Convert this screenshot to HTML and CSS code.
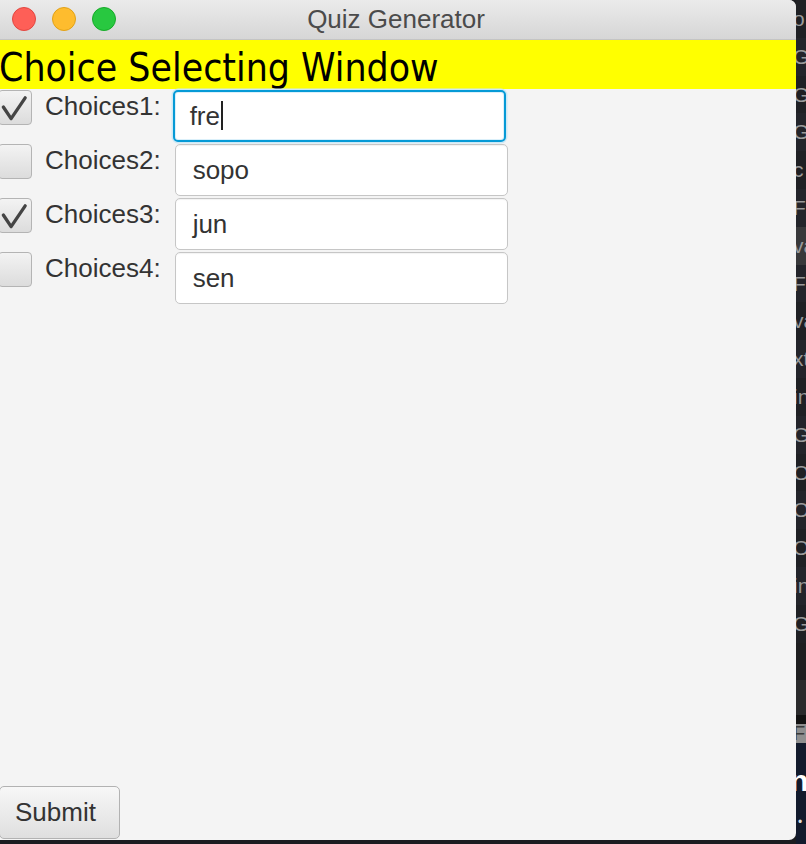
FILE: index.html
```html
<!DOCTYPE html>
<html lang="en">
<head>
<meta charset="utf-8">
<title>Quiz Generator</title>
<link rel="stylesheet" href="styles.css">
</head>
<body>
<div class="desk">
  <div class="window">
    <div class="titlebar">
      <div class="lights">
        <span class="light red"></span>
        <span class="light yellow"></span>
        <span class="light green"></span>
      </div>
      <div class="title">Quiz Generator</div>
    </div>
    <div class="banner">Choice Selecting Window</div>
    <div class="rows">
      <div class="row">
        <span class="check"><svg viewBox="0 0 34 34" width="34" height="34"><path d="M5.5 16 L13.5 28 L28 6.5" fill="none" stroke="#444" stroke-width="3.4" stroke-linecap="round" stroke-linejoin="round"/></svg></span>
        <span class="label">Choices1:</span>
        <div class="field focused">fre<span class="caret"></span></div>
      </div>
      <div class="row">
        <span class="check"></span>
        <span class="label">Choices2:</span>
        <div class="field">sopo</div>
      </div>
      <div class="row">
        <span class="check"><svg viewBox="0 0 34 34" width="34" height="34"><path d="M5.5 16 L13.5 28 L28 6.5" fill="none" stroke="#444" stroke-width="3.4" stroke-linecap="round" stroke-linejoin="round"/></svg></span>
        <span class="label">Choices3:</span>
        <div class="field">jun</div>
      </div>
      <div class="row">
        <span class="check"></span>
        <span class="label">Choices4:</span>
        <div class="field">sen</div>
      </div>
    </div>
    <button class="submit">Submit</button>
  </div>
  <div class="side">
    <div class="list">
      <div class="item">o</div>
      <div class="item">G</div>
      <div class="item">G</div>
      <div class="item">G</div>
      <div class="item">c</div>
      <div class="item">F</div>
      <div class="item hl">va</div>
      <div class="item">F</div>
      <div class="item">va</div>
      <div class="item">xt</div>
      <div class="item">in</div>
      <div class="item">G</div>
      <div class="item">O</div>
      <div class="item">O</div>
      <div class="item">O</div>
      <div class="item">in</div>
      <div class="item">G</div>
    </div>
    <div class="band b1"></div>
    <div class="band b2"></div>
    <div class="band b3"></div>
    <div class="band b4">F</div>
    <div class="navy">
      <div class="big">n</div>
      <div class="dot">•</div>
    </div>
  </div>
</div>
</body>
</html>
```

FILE: styles.css
```css
html, body {
  margin: 0;
  padding: 0;
  background: #1b1c20;
}

.desk {
  display: flex;
  width: 806px;
  height: 844px;
  overflow: hidden;
}

.window {
  width: 796px;
  height: 840px;
  flex: none;
  display: flex;
  flex-direction: column;
  background: #f4f4f4;
  border-radius: 0 7px 7px 0;
  overflow: hidden;
  font-family: "Liberation Sans", Arial, sans-serif;
  color: #333;
}

.titlebar {
  height: 39px;
  border-bottom: 1px solid #c4c4c4;
  background: linear-gradient(#ebebeb, #d6d6d6);
  display: flex;
  align-items: center;
  justify-content: center;
  position: relative;
}

.lights {
  position: absolute;
  left: 12px;
  top: 7px;
  display: flex;
  gap: 16px;
}

.light {
  width: 22px;
  height: 22px;
  border-radius: 50%;
  border: 1px solid;
}

.red { background: #fe5f57; border-color: #e2463f; }
.yellow { background: #febc2e; border-color: #e1a116; }
.green { background: #28c840; border-color: #16ab28; }

.title {
  font-size: 26px;
  line-height: 39px;
  color: #4b4b4b;
  margin-left: -4px;
}

.banner {
  height: 49px;
  box-sizing: border-box;
  padding-top: 3px;
  background: #ffff00;
  color: #000;
  font-family: "DejaVu Sans Condensed", "DejaVu Sans", sans-serif;
  font-size: 38.8px;
  line-height: 49px;
  white-space: nowrap;
  overflow: hidden;
  margin-left: -1px;
}

.rows {
  padding-top: 1px;
  display: flex;
  flex-direction: column;
  gap: 2px;
}

.row {
  height: 52px;
  display: flex;
  align-items: flex-start;
}

.check {
  width: 32px;
  height: 33px;
  margin-left: -2px;
  border: 1px solid #b4b4b4;
  border-radius: 4px;
  background: linear-gradient(#f3f3f3, #dcdcdc);
  display: flex;
  align-items: center;
  justify-content: center;
  box-sizing: content-box;
}

.check svg {
  display: block;
  margin-left: -1px;
}

.label {
  margin-left: 13px;
  margin-top: 1px;
  font-size: 26px;
  line-height: 30px;
  color: #333;
}

.field {
  margin-left: 14px;
  width: 333px;
  height: 52px;
  box-sizing: border-box;
  border: 1px solid #c6c6c6;
  border-radius: 5px;
  background: #fff;
  box-shadow: inset 0 1px 1px rgba(0, 0, 0, 0.05);
  padding-left: 17px;
  font-size: 26px;
  line-height: 50px;
  color: #333;
}

.field.focused {
  border: 2px solid #069ad6;
  box-shadow: 0 0 0 1.5px #cde9f6, inset 0 0 0 1px #dbf0fa;
  line-height: 48px;
  padding-left: 15px;
  margin-left: 12px;
}

.caret {
  display: inline-block;
  width: 2px;
  height: 29px;
  background: #222;
  vertical-align: -5px;
  margin-left: 1px;
}

.submit {
  margin-top: auto;
  margin-bottom: 1px;
  margin-left: -1px;
  width: 121px;
  height: 53px;
  border: 1px solid #b2b2b2;
  border-radius: 5px;
  background: linear-gradient(#f7f7f7, #dfdfdf);
  font-family: "Liberation Sans", Arial, sans-serif;
  font-size: 26px;
  color: #333;
  text-align: left;
  padding: 0 0 0 15px;
  box-sizing: border-box;
}

.side {
  flex: 1;
  display: flex;
  flex-direction: column;
  overflow: hidden;
  background: #1e1f23;
  font-family: "Liberation Sans", Arial, sans-serif;
}

.item {
  height: 37.8px;
  line-height: 37.8px;
  font-size: 21px;
  color: #9a9a9a;
  text-indent: -3px;
  white-space: nowrap;
}

.item:nth-child(odd) { background: #1f2024; }
.item:nth-child(even) { background: #23242a; }
.item.hl { background: #38383a; }

.band { flex: none; }
.b1 { height: 37px; background: #1e1e20; }
.b2 { height: 35px; background: #2a2a2c; }
.b3 { height: 9px; background: #121212; }
.b4 {
  height: 19px;
  background: #8e8e8e;
  color: #3a3a3a;
  font-size: 20px;
  line-height: 19px;
  text-indent: -3px;
}

.navy {
  flex: 1;
  background: #121a2c;
  color: #fff;
}

.big {
  margin-top: 22px;
  font-size: 30px;
  font-weight: bold;
  line-height: 32px;
  text-indent: -6px;
}

.dot {
  margin-top: 18px;
  font-size: 12px;
  text-indent: 2px;
  color: #ddd;
}
```
